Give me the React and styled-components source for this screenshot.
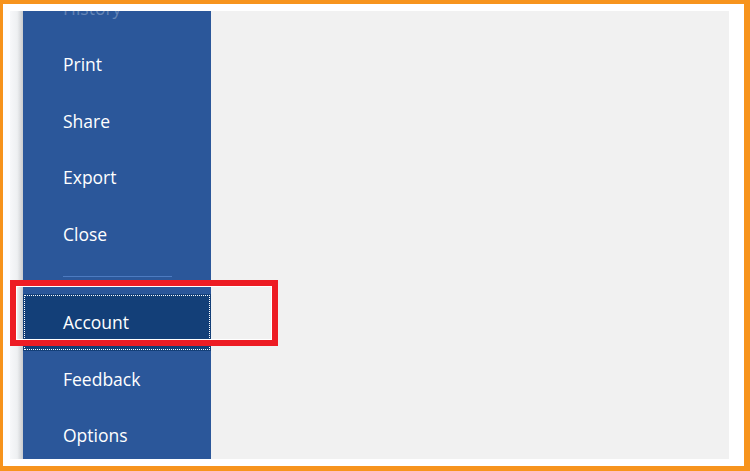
import React from 'react';
import styled, { createGlobalStyle } from 'styled-components';

const GlobalStyle = createGlobalStyle`
  html, body {
    margin: 0;
    padding: 0;
    background: #ffffff;
  }
  body {
    font-family: "Open Sans", "Noto Sans", "DejaVu Sans", sans-serif;
  }
`;

const Frame = styled.div`
  position: relative;
  width: 750px;
  height: 471px;
  box-sizing: border-box;
  border-style: solid;
  border-color: #f7941d;
  border-width: 4px 6px 5px 3px;
  padding: 7px 15px 7px 7px;
  background: #ffffff;
`;

const Window = styled.div`
  display: flex;
  height: 100%;
  background: #f1f1f1;
  overflow: hidden;
`;

const Strip = styled.div`
  width: 13px;
  flex-shrink: 0;
  background: linear-gradient(to right, #f7f8fa 0%, #eef0f2 55%, #c9cbce 100%);
`;

const Sidebar = styled.nav`
  width: 188px;
  flex-shrink: 0;
  background: #2b579a;
  overflow: hidden;
`;

const List = styled.ul`
  list-style: none;
  margin: -31.5px 0 0 0;
  padding: 0;
`;

const Item = styled.li`
  display: flex;
  align-items: center;
  height: 56.5px;
  box-sizing: border-box;
  padding-left: 40px;
  font-size: 17.5px;
  font-weight: 500;
  color: ${p => (p.$faded ? 'rgba(255, 255, 255, 0.28)' : '#ffffff')};
  background: ${p => (p.$active ? '#133f78' : 'transparent')};
  outline: ${p => (p.$active ? '1px dotted #ffffff' : 'none')};
  outline-offset: -2px;
  cursor: default;
`;

const Separator = styled.li`
  height: 1px;
  margin: 14px 39px 17px 40px;
  background: #4d7bc1;
`;

const Main = styled.main`
  flex: 1;
`;

const Highlight = styled.div`
  position: absolute;
  left: 7px;
  top: 276px;
  width: 268px;
  height: 66px;
  box-sizing: border-box;
  border: 6px solid #ed1c24;
  box-shadow: inset 0 0 0 1px #ffffff;
  pointer-events: none;
`;

const top = ['History', 'Print', 'Share', 'Export', 'Close'];
const bottom = ['Account', 'Feedback', 'Options'];

export default function App() {
  return (
    <>
      <GlobalStyle />
      <Frame>
        <Window>
          <Strip />
          <Sidebar>
            <List>
              {top.map(label => (
                <Item key={label} $faded={label === 'History'}>
                  {label}
                </Item>
              ))}
              <Separator />
              {bottom.map(label => (
                <Item key={label} $active={label === 'Account'}>
                  {label}
                </Item>
              ))}
            </List>
          </Sidebar>
          <Main />
        </Window>
        <Highlight />
      </Frame>
    </>
  );
}
